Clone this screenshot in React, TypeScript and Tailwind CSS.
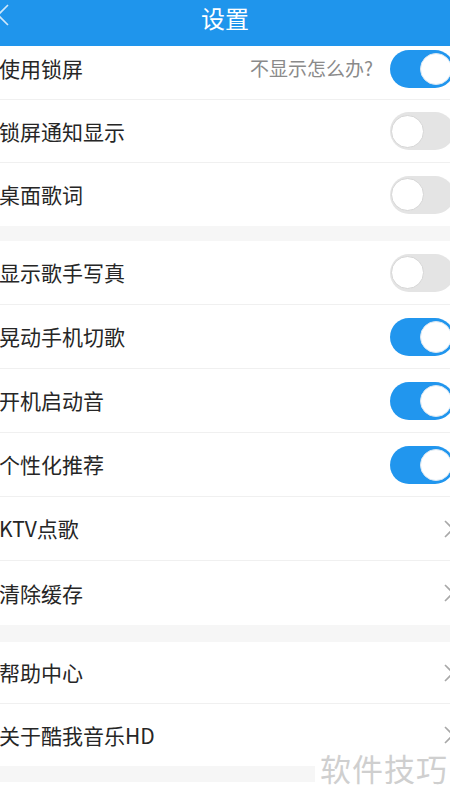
import React from "react";

type Row = {
  label: string;
  kind: "on" | "off" | "arrow";
  hint?: string;
};

const groups: { h: string; gap: string; rows: Row[] }[] = [
  {
    h: "h-[63px]",
    gap: "h-[15px]",
    rows: [
      { label: "使用锁屏", kind: "on", hint: "不显示怎么办?" },
      { label: "锁屏通知显示", kind: "off" },
      { label: "桌面歌词", kind: "off" },
    ],
  },
  {
    h: "h-[64px]",
    gap: "h-[17px]",
    rows: [
      { label: "显示歌手写真", kind: "off" },
      { label: "晃动手机切歌", kind: "on" },
      { label: "开机启动音", kind: "on" },
      { label: "个性化推荐", kind: "on" },
      { label: "KTV点歌", kind: "arrow" },
      { label: "清除缓存", kind: "arrow" },
    ],
  },
  {
    h: "h-[62px]",
    gap: "h-[16px]",
    rows: [
      { label: "帮助中心", kind: "arrow" },
      { label: "关于酷我音乐HD", kind: "arrow" },
    ],
  },
];

const Toggle = ({ on }: { on: boolean }) => (
  <div
    className={
      on
        ? "w-[64px] h-[38px] rounded-full bg-[#2196ee] flex items-center justify-end pr-[2px] -mr-[4px] shrink-0"
        : "w-[64px] h-[38px] rounded-full bg-[#e4e4e4] flex items-center justify-start pl-[1px] -mr-[4px] shrink-0"
    }
  >
    <div
      className={
        on
          ? "w-[32px] h-[32px] rounded-full bg-white border border-[#d8e6f2]"
          : "w-[33px] h-[33px] rounded-full bg-white border border-[#d6d6d6]"
      }
    />
  </div>
);

const Chevron = () => (
  <svg width="12" height="20" viewBox="0 0 12 20" className="-mr-[5px] shrink-0">
    <polyline points="2,2 10,10 2,18" fill="none" stroke="#a8a8a8" strokeWidth="1.6" />
  </svg>
);

export default function App() {
  return (
    <div
      className="relative w-[450px] h-[801px] overflow-hidden bg-white"
      style={{ fontFamily: '"Noto Sans CJK SC", "Noto Sans", sans-serif' }}
    >
      {/* header */}
      <div className="relative h-[46px] bg-[#1f95ec] flex justify-center">
        <svg width="14" height="26" viewBox="0 0 14 26" className="absolute left-[-4px] top-[3px]">
          <polyline points="12,2 2,12 12,22" fill="none" stroke="#cfe8fb" strokeWidth="1.6" />
        </svg>
        <span className="text-[24px] leading-[35px] text-white">设置</span>
      </div>

      {groups.map((g, gi) => (
        <div key={gi}>
          {g.rows.map((r, i) => (
            <div
              key={r.label}
              className={
                (gi === 0 && i === 0 ? "h-[54px] pb-2 " : g.h + " ") +
                (i < g.rows.length - 1 ? "border-b border-[#f0f0f0] " : "") +
                "flex items-center justify-between"
              }
            >
              <span className="text-[21px] leading-none text-[#262626] -ml-[1px]">{r.label}</span>
              <div className="flex items-center">
                {r.hint && (
                  <span className="text-[19px] text-[#8a8a8a] mr-[17px]">{r.hint}</span>
                )}
                {r.kind === "arrow" ? <Chevron /> : <Toggle on={r.kind === "on"} />}
              </div>
            </div>
          ))}
          <div className={g.gap + " bg-[#f6f6f6]"} />
        </div>
      ))}

      {/* watermark */}
      <div className="absolute left-[315px] top-[748px] w-[140px] h-[38px] bg-white flex items-center pl-[5px]">
        <span className="text-[31px] leading-none text-[#cfcfcf] tracking-[1px]">软件技巧</span>
      </div>
    </div>
  );
}
